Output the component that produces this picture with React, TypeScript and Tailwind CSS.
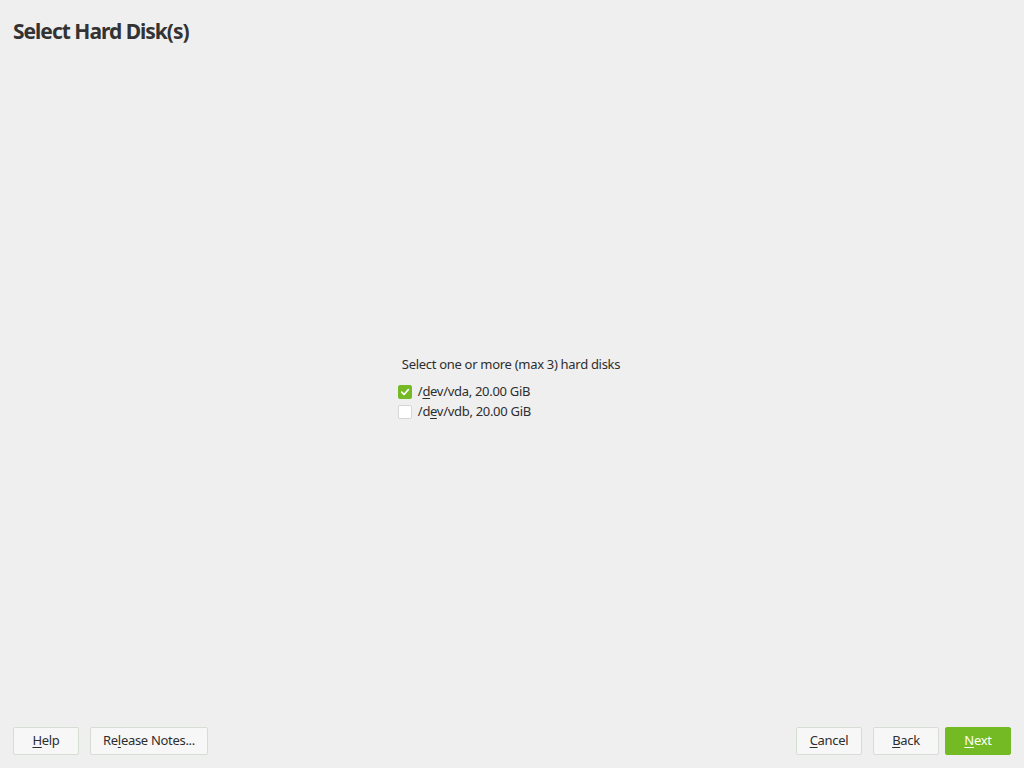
import React, { useState } from 'react';

const font = { fontFamily: '"Noto Sans", "Open Sans", sans-serif' };

const Button: React.FC<{ children: React.ReactNode; primary?: boolean; className?: string }> = ({ children, primary, className }) => (
    <button
        className={`h-[28px] rounded-[2px] text-[13px] tracking-[-0.3px] flex items-center justify-center ${primary ? 'bg-[#73ba25] text-white border border-[#73ba25]' : 'bg-[#f7f7f7] text-[#2e2e2e] border border-[#d6ddd4]'} ${className ?? ''}`}
    >
        {children}
    </button>
);

export default function App() {
    const [disks, setDisks] = useState([true, false]);

    const toggle = (i: number) => setDisks((prev) => prev.map((v, j) => (j === i ? !v : v)));

    return (
        <div className="w-[1024px] h-[768px] bg-[#efefef] flex flex-col text-[#2e2e2e]" style={font}>
            {/* Title */}
            <h1 className="pl-[13px] pt-[15px] text-[21px] font-bold leading-[32px] tracking-[-1px] text-[#333]">Select Hard Disk(s)</h1>

            {/* Disk selection */}
            <div className="flex-1 flex items-center justify-center pt-[2px]">
                <div className="flex flex-col text-[13px] tracking-[-0.3px] ml-[-6px]">
                    <div className="pl-[4px] leading-[20px] mb-[8px]">Select one or more (max 3) hard disks</div>
                    {['/dev/vda, 20.00 GiB', '/dev/vdb, 20.00 GiB'].map((label, i) => (
                        <label key={i} className="flex items-center h-[20px] cursor-default" onClick={() => toggle(i)}>
                            <span
                                className={`w-[14px] h-[14px] rounded-[2px] flex items-center justify-center mr-[6px] ${disks[i] ? 'bg-[#73ba25] border border-[#73ba25]' : 'bg-white border border-[#d6d6d6]'}`}
                            >
                                {disks[i] && (
                                    <svg viewBox="0 0 12 12" className="w-[10px] h-[10px]">
                                        <path d="M2 6.2 L4.8 9 L10 3.2" fill="none" stroke="white" strokeWidth="2" strokeLinecap="round" strokeLinejoin="round" />
                                    </svg>
                                )}
                            </span>
                            <span>
                                {i === 0 ? (
                                    <>/<u className="underline-offset-2">d</u>ev/vda, 20.00 GiB</>
                                ) : (
                                    <>/d<u className="underline-offset-2">e</u>v/vdb, 20.00 GiB</>
                                )}
                            </span>
                        </label>
                    ))}
                </div>
            </div>

            {/* Bottom buttons */}
            <div className="flex items-center justify-between px-[13px] pb-[13px]">
                <div className="flex gap-[11px]">
                    <Button className="w-[66px]"><u className="underline-offset-2">H</u>elp</Button>
                    <Button className="w-[118px]">Re<u className="underline-offset-2">l</u>ease Notes...</Button>
                </div>
                <div className="flex gap-[11px]">
                    <Button className="w-[66px]"><u className="underline-offset-2">C</u>ancel</Button>
                    <Button className="w-[66px]"><u className="underline-offset-2">B</u>ack</Button>
                    <Button primary className="w-[66px] ml-[-5px]"><u className="underline-offset-2">N</u>ext</Button>
                </div>
            </div>
        </div>
    );
}
